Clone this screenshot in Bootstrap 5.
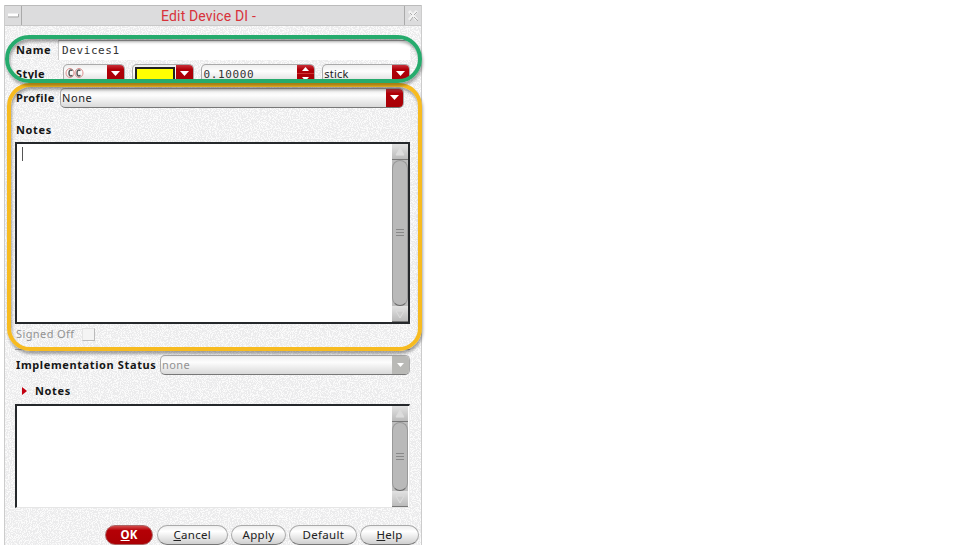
<!DOCTYPE html>
<html lang="en">
<head>
<meta charset="utf-8">
<title>Edit Device DI</title>
<link href="https://cdn.jsdelivr.net/npm/bootstrap@5.3.0/dist/css/bootstrap.min.css" rel="stylesheet">
<style>
body{background:#fff;font:11px/16px "Noto Sans","Open Sans",sans-serif;color:#222;overflow:hidden}
.dialog{width:418px;height:540px;margin:5px 0 0 4px;border-left:1px solid #ccc;border-right:1px solid #ccc;background:#f0f0f1}
.grain{left:0;top:0;width:100%;height:100%}
.content{position:relative}
.titlebar{height:21px;background:#dcdcdd;border-top:1px solid #bbb;border-bottom:1px solid #c8c8c8;color:#d8323a}
.titlebar .cap{font:14px/20px Roboto,sans-serif;letter-spacing:.15px;padding-right:9px}
.winbtn{width:17px;border-right:1px solid #aaa}
.winbtn.end{border-right:0;border-left:1px solid #aaa}
.form-area{padding:14px 11px 0 10px}
.lab{font-weight:700;color:#161616;letter-spacing:.62px;white-space:nowrap;padding-left:1px}
.tight{letter-spacing:.4px}
.mono{font-family:"DejaVu Sans Mono",monospace;color:#333;letter-spacing:.6px}
.name-row{height:20px}
.name-row .lab{width:43px}
.field{background:#fff;border-top:1px solid #aaa;border-left:1px solid #ccc;padding-left:3px;line-height:19px;font-size:11px}
.style-row{height:16px;margin-top:4px;overflow:hidden}
.combo{height:20px;border:1px solid #aaa;border-bottom-color:#777;border-radius:5px;background:linear-gradient(#eee,#fdfdfd 35%,#d9d9d9);overflow:hidden;line-height:18px;letter-spacing:.2px}
.drop{width:17px;height:100%;background:linear-gradient(#c8303a,#b00008 25%,#a80006);flex:none;display:flex;align-items:center;justify-content:center}
.drop.dim{background:#b9b9b6}
.profile-row{margin-top:8px;height:20px}
.box{background:#fff;border:2px solid #25282b}
.box.upper{height:182px;margin-top:4px}
.box.lower{height:104px;margin-top:5px;border-right:1px solid #eee;border-bottom:1px solid #e6e6e6}
.box.lower .scroll{margin-right:1px}
.scroll{width:16px;background:#bdbdbd;flex:none}
.arrow{height:16px;background:linear-gradient(#e2e2e2,#bbb);border-bottom:1px solid #777}
.thumb{border:1px solid #999;border-bottom:1px solid #666;border-radius:8px;background:#b9b9b9}
.caret-line{width:1px;height:14px;background:#555;margin:3px 0 0 5px}
.off{color:#929292;letter-spacing:.4px}
.tick{width:13px;height:13px;border:1px solid #e4e4e4;border-right-color:#bbb;border-bottom-color:#bbb;background:#f4f4f4;margin-left:8px}
.rule{height:1px;background:#aaa;margin:7px 0 5px}
.actions{margin-top:17px;height:20px;margin-left:90px;margin-right:-9px;gap:4px}
.pill{height:20px;border:1px solid #aaa;border-bottom-color:#777;border-radius:10px;background:linear-gradient(#eee,#fff 30%,#cfcfcf);padding:0;font:11.5px/16px "Noto Sans",sans-serif;color:#222;letter-spacing:.3px}
.pill.main{background:linear-gradient(#d34a4a,#b50006 25%,#ab0004);border-color:#a66;color:#fff;font-weight:700;letter-spacing:0}
.ring{pointer-events:none;border:4px solid;border-radius:25px;box-shadow:1px 3px 3px #0005,inset 1px 3px 3px #0005}
.ring.green{left:5px;top:35px;width:417px;height:48px;border-color:#26ab6d}
.ring.gold{left:7px;top:83px;width:415px;height:268px;border-color:#f7bb20;border-radius:23px}
</style>
</head>
<body>
<main class="dialog position-relative">
<svg class="grain position-absolute" aria-hidden="true"><filter id="g"><feTurbulence type="fractalNoise" baseFrequency=".9" numOctaves="2" seed="4"/><feColorMatrix values="0 0 0 0 1  0 0 0 0 1  0 0 0 0 1  8 0 0 0 -3.7"/></filter><rect width="100%" height="100%" fill="#ebebec"/><rect width="100%" height="100%" filter="url(#g)" opacity=".8"/></svg>
<div class="content">
<header class="titlebar d-flex">
<div class="winbtn d-flex align-items-center justify-content-center"><svg width="11" height="5"><path d="M0 .5h10v3H0z" fill="#fff"/><path d="M0 4h10.5V1" stroke="#aaa" fill="none"/></svg></div>
<div class="cap flex-grow-1 text-center">Edit Device DI -</div>
<div class="winbtn end d-flex align-items-center justify-content-center"><svg width="11" height="12"><path d="M1 1l8 9M9 1L1 10" stroke="#f2f2f2" stroke-width="3"/><path d="M2 3l2 2M2 11l3-4M6 7l4 4M9 2L6 5" stroke="#aaa"/></svg></div>
</header>
<div class="form-area">
<div class="name-row d-flex align-items-center"><label class="lab">Name</label><div class="field mono flex-grow-1 h-100">Devices1</div></div>
<div class="style-row d-flex">
<label class="lab tight" style="width:48px;line-height:19px">Style</label>
<div class="combo d-flex" style="width:62px"><div class="flex-grow-1"><svg width="20" height="16" class="d-block" style="margin-left:1px"><g fill="none" stroke="#dc8f8f"><ellipse cx="5" cy="8" rx="4" ry="4.500"/><ellipse cx="14" cy="8" rx="4" ry="4.500"/></g><path d="M7.500 5.500Q4 4 4 8T7.500 10.500M15.500 5.500Q12 4 12 8T15.500 10.500" fill="none" stroke="#555" stroke-width="1.500"/></svg></div><div class="drop"><svg width="9" height="6"><path d="M0 0h9L4.500 5z" fill="#fff"/></svg></div></div>
<div class="combo d-flex" style="width:62px;margin-left:7px"><div class="flex-grow-1"><svg width="43" height="18" class="d-block"><path d="M3 3h38v15H3z" fill="#ff0" stroke="#222" stroke-width="2"/></svg></div><div class="drop"><svg width="9" height="6"><path d="M0 0h9L4.500 5z" fill="#fff"/></svg></div></div>
<div class="combo d-flex bg-white" style="width:115px;margin-left:7px"><div class="mono flex-grow-1" style="padding-left:2px;line-height:19px">0.10000</div><div class="drop"><svg width="17" height="18"><path d="M5 6h7L8.500 2zM5 12h7L8.500 16z" fill="#fff"/><path d="M0 8.500h17" stroke="#c33"/></svg></div></div>
<div class="combo d-flex" style="width:88px;margin-left:7px"><div class="flex-grow-1" style="padding-left:1px">stick</div><div class="drop"><svg width="9" height="6"><path d="M0 0h9L4.500 5z" fill="#fff"/></svg></div></div>
</div>
<div class="profile-row d-flex align-items-center"><label class="lab tight" style="width:45px">Profile</label><div class="combo d-flex" style="width:344px"><div class="flex-grow-1" style="padding-left:1px;letter-spacing:.6px">None</div><div class="drop"><svg width="9" height="6"><path d="M0 0h9L4.500 5z" fill="#fff"/></svg></div></div></div>
<div class="lab" style="margin-top:14px">Notes</div>
<div class="box upper d-flex"><div class="flex-grow-1"><div class="caret-line"></div></div>
<div class="scroll d-flex flex-column"><div class="arrow"><svg width="16" height="15" class="d-block"><path d="M4 11h8L8 4z" fill="#ddd" stroke="#ddd"/></svg></div><div class="thumb flex-grow-1 d-flex align-items-center justify-content-center"><svg width="8" height="12"><path d="M0 2.500h8M0 5.500h8M0 8.500h8" stroke="#888"/></svg></div><div class="arrow"><svg width="16" height="15" class="d-block"><path d="M4 5h8L8 12z" fill="#ccc" stroke="#ddd"/></svg></div></div></div>
<div class="d-flex align-items-center off" style="margin-top:2px;padding-left:1px">Signed Off<span class="tick"></span></div>
<div class="rule" style="width:395px"></div>
<div class="d-flex align-items-center" style="height:20px"><label class="lab" style="width:145px">Implementation Status</label><div class="combo d-flex off flex-grow-1"><div class="flex-grow-1" style="padding-left:1px">none</div><div class="drop dim"><svg width="7" height="5"><path d="M0 0h7L3.500 4z" fill="#fff"/></svg></div></div></div>
<div class="d-flex align-items-center" style="margin-top:8px;padding-left:7px"><svg width="6" height="8"><path d="M0 0L5 4L0 8z" fill="#c20010"/></svg><div class="lab" style="margin-left:6px">Notes</div></div>
<div class="box lower d-flex"><div class="flex-grow-1"></div>
<div class="scroll d-flex flex-column"><div class="arrow"><svg width="16" height="15" class="d-block"><path d="M4 11h8L8 4z" fill="#ddd" stroke="#ddd"/></svg></div><div class="thumb flex-grow-1 d-flex align-items-center justify-content-center"><svg width="8" height="12"><path d="M0 2.500h8M0 5.500h8M0 8.500h8" stroke="#888"/></svg></div><div class="arrow"><svg width="16" height="15" class="d-block"><path d="M4 5h8L8 12z" fill="#ccc" stroke="#ddd"/></svg></div></div></div>
<div class="actions d-flex"><button class="pill main" style="width:48px"><u>O</u>K</button><button class="pill" style="width:71px"><u>C</u>ancel</button><button class="pill" style="width:56px;margin-left:-1px">Apply</button><button class="pill" style="width:68px;margin-left:-1px">Default</button><button class="pill" style="width:59px;margin-left:-1px"><u>H</u>elp</button></div>
</div>
</div>
</main>
<div class="ring gold position-absolute"></div>
<div class="ring green position-absolute"></div>
<script src="https://cdn.jsdelivr.net/npm/bootstrap@5.3.0/dist/js/bootstrap.bundle.min.js"></script>
</body>
</html>
